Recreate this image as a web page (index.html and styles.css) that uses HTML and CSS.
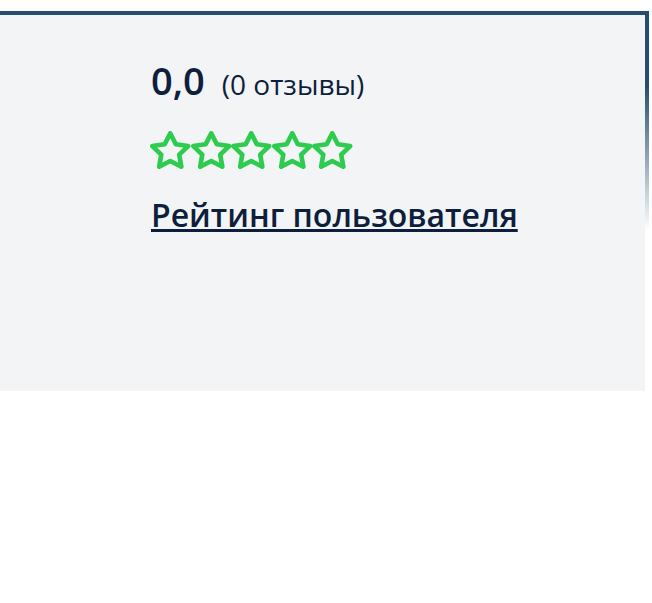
FILE: index.html
```html
<!DOCTYPE html>
<html lang="ru">
<head>
<meta charset="utf-8">
<link rel="stylesheet" href="styles.css">
</head>
<body>
<section class="card">
  <div class="rating">
    <div class="score-row">
      <span class="score">0,0</span>
      <span class="count">(0 отзывы)</span>
    </div>
    <div class="stars">
      <svg viewBox="1.95 1.65 20.1 19.26" preserveAspectRatio="none" class="star"><path d="M12 2.8l2.75 5.6 6.15.9-4.45 4.34 1.05 6.12L12 16.87l-5.5 2.89 1.05-6.12L3.1 9.3l6.15-.9z"/></svg>
      <svg viewBox="1.95 1.65 20.1 19.26" preserveAspectRatio="none" class="star"><path d="M12 2.8l2.75 5.6 6.15.9-4.45 4.34 1.05 6.12L12 16.87l-5.5 2.89 1.05-6.12L3.1 9.3l6.15-.9z"/></svg>
      <svg viewBox="1.95 1.65 20.1 19.26" preserveAspectRatio="none" class="star"><path d="M12 2.8l2.75 5.6 6.15.9-4.45 4.34 1.05 6.12L12 16.87l-5.5 2.89 1.05-6.12L3.1 9.3l6.15-.9z"/></svg>
      <svg viewBox="1.95 1.65 20.1 19.26" preserveAspectRatio="none" class="star"><path d="M12 2.8l2.75 5.6 6.15.9-4.45 4.34 1.05 6.12L12 16.87l-5.5 2.89 1.05-6.12L3.1 9.3l6.15-.9z"/></svg>
      <svg viewBox="1.95 1.65 20.1 19.26" preserveAspectRatio="none" class="star"><path d="M12 2.8l2.75 5.6 6.15.9-4.45 4.34 1.05 6.12L12 16.87l-5.5 2.89 1.05-6.12L3.1 9.3l6.15-.9z"/></svg>
    </div>
    <a class="user-link" href="#">Рейтинг пользователя</a>
  </div>
</section>
</body>
</html>
```
FILE: styles.css
```css
html, body {
  margin: 0;
  padding: 0;
  background: #ffffff;
}
body {
  font-family: "Open Sans", "Noto Sans", sans-serif;
  color: #0d1f3c;
}
.card {
  position: relative;
  box-sizing: border-box;
  width: 649px;
  height: 380px;
  margin-top: 11px;
  border-top: 4px solid #244d70;
  background: linear-gradient(to right, #f3f4f6 645px, transparent 645px);
  padding: 39px 0 0 151px;
}
.card::after {
  content: "";
  position: absolute;
  top: 0;
  right: 0;
  width: 4px;
  height: 216px;
  background: linear-gradient(to bottom, #244d70 0, #244d70 70px, rgba(36, 77, 112, 0) 216px);
}
.rating {
  display: flex;
  flex-direction: column;
  align-items: flex-start;
}
.score-row {
  display: flex;
  align-items: baseline;
  gap: 17px;
  height: 52px;
}
.score {
  font-size: 38px;
  font-weight: 600;
  line-height: 52px;
}
.count {
  font-size: 28px;
  font-weight: 400;
  line-height: 1;
}
.stars {
  display: flex;
  margin-top: 25px;
  margin-left: -1px;
}
.star {
  display: block;
  width: 40.5px;
  height: 38px;
  fill: none;
  stroke: #2ecc4e;
  stroke-width: 2.3;
  stroke-linejoin: round;
}
.user-link {
  margin-top: 24px;
  font-size: 32px;
  font-weight: 600;
  line-height: 44px;
  color: #0d1f3c;
  text-decoration: underline;
  text-decoration-thickness: 3px;
  text-underline-offset: 2px;
}
```
